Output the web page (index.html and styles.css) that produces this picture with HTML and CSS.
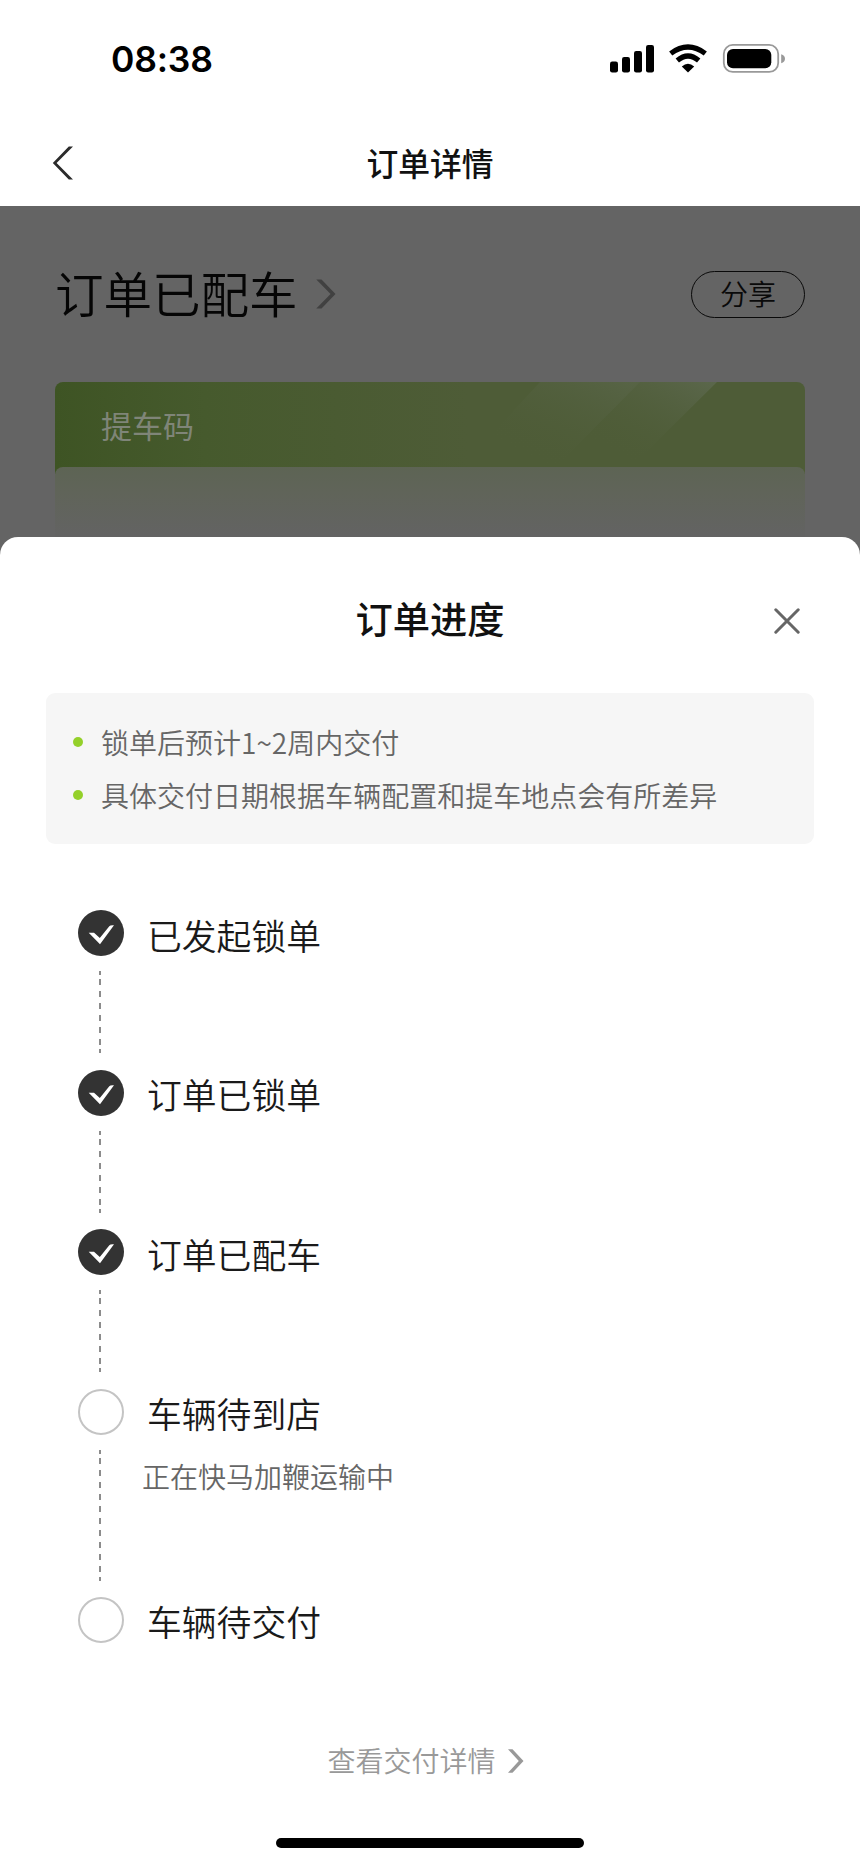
FILE: index.html
```html
<!DOCTYPE html>
<html lang="zh-CN">
<head>
<meta charset="utf-8">
<title>订单详情</title>
<link rel="stylesheet" href="styles.css">
</head>
<body>
<div class="phone">
  <header class="top">
    <div class="status">
      <span class="time">08:38</span>
      <svg class="status-icons" width="176" height="32" viewBox="0 0 176 32">
        <g fill="#000">
          <rect x="0" y="17.500" width="8" height="11" rx="2.200"/>
          <rect x="12" y="13" width="8" height="15.500" rx="2.200"/>
          <rect x="24" y="7" width="8" height="21.500" rx="2.200"/>
          <rect x="36" y="1" width="8" height="27.500" rx="2.200"/>
          <path d="M78 28.500 L71.800 22.400 Q78 17.200 84.200 22.400 Z"/>
        </g>
        <g fill="none" stroke="#000" stroke-width="5.200">
          <path d="M60.700 9.500 Q78 -3.500 95.300 9.500"/>
          <path d="M67.300 16.500 Q78 7.500 88.700 16.500"/>
        </g>
        <rect x="113.800" y="0.900" width="54.400" height="27" rx="9" fill="none" stroke="#999" stroke-width="1.800"/>
        <rect x="117" y="5" width="44.300" height="19.300" rx="6" fill="#000"/>
        <path d="M171.200 10.200 Q175 11.500 175 14.700 Q175 18 171.200 19.200 Z" fill="#999"/>
      </svg>
    </div>
    <nav class="nav">
      <svg class="back" width="22" height="34" viewBox="0 0 22 34"><path d="M17.800 .5 H22 L5.600 17 L22 33.500 H17.800 L1.800 17 Z" fill="#2b2b2b"/></svg>
      <h1 class="nav-title">订单详情</h1>
    </nav>
  </header>

  <section class="order">
    <div class="order-head">
      <h2 class="order-state">订单已配车</h2>
      <svg class="order-arrow" width="20" height="30" viewBox="0 0 20 30"><path d="M.3 .5 H5.500 L19.500 15 L5.500 29.500 H.3 L14.600 15 Z" fill="#414141"/></svg>
      <span class="share">分享</span>
    </div>
    <div class="ticket">
      <div class="ticket-label">提车码</div>
      <svg class="rays" width="300" height="86" viewBox="0 0 300 86">
        <defs>
          <linearGradient id="ray" x1="1" y1="0" x2="0" y2="1">
            <stop offset="0" stop-color="#5b674c"/>
            <stop offset=".75" stop-color="#4e5c37" stop-opacity="0"/>
          </linearGradient>
        </defs>
        <path d="M100 0 H200 L115 86 H20 Z" fill="url(#ray)" opacity=".75"/>
        <path d="M195 0 H277 L190 86 H120 Z" fill="url(#ray)"/>
      </svg>
      <div class="ticket-body"></div>
    </div>
  </section>

  <main class="sheet">
    <div class="sheet-head">
      <h2 class="sheet-title">订单进度</h2>
      <svg class="close" width="26" height="26" viewBox="0 0 26 26"><path d="M1.800 1.800 L24.200 24.200 M24.200 1.800 L1.800 24.200" fill="none" stroke="#666" stroke-width="3" stroke-linecap="round"/></svg>
    </div>
    <ul class="notes">
      <li>锁单后预计1~2周内交付</li>
      <li>具体交付日期根据车辆配置和提车地点会有所差异</li>
    </ul>
    <ol class="steps">
      <li class="step">
        <div class="rail"><svg class="dot" viewBox="0 0 46 46"><circle cx="23" cy="23" r="23" fill="#333"/><path d="M10.700 22.700 H16 L21.800 28 L31.300 16.200 Q32.200 15 36 15.300 L22 34.300 Z" fill="#fff"/></svg><i class="line"></i></div>
        <h3 class="step-name">已发起锁单</h3>
      </li>
      <li class="step">
        <div class="rail"><svg class="dot" viewBox="0 0 46 46"><circle cx="23" cy="23" r="23" fill="#333"/><path d="M10.700 22.700 H16 L21.800 28 L31.300 16.200 Q32.200 15 36 15.300 L22 34.300 Z" fill="#fff"/></svg><i class="line"></i></div>
        <h3 class="step-name">订单已锁单</h3>
      </li>
      <li class="step">
        <div class="rail"><svg class="dot" viewBox="0 0 46 46"><circle cx="23" cy="23" r="23" fill="#333"/><path d="M10.700 22.700 H16 L21.800 28 L31.300 16.200 Q32.200 15 36 15.300 L22 34.300 Z" fill="#fff"/></svg><i class="line"></i></div>
        <h3 class="step-name">订单已配车</h3>
      </li>
      <li class="step step-long">
        <div class="rail"><svg class="dot" viewBox="0 0 46 46"><circle cx="23" cy="23" r="22" fill="#fff" stroke="#c4c4c4" stroke-width="2"/></svg><i class="line"></i></div>
        <div><h3 class="step-name">车辆待到店</h3><p class="step-note">正在快马加鞭运输中</p></div>
      </li>
      <li class="step step-last">
        <div class="rail"><svg class="dot" viewBox="0 0 46 46"><circle cx="23" cy="23" r="22" fill="#fff" stroke="#c4c4c4" stroke-width="2"/></svg></div>
        <h3 class="step-name">车辆待交付</h3>
      </li>
    </ol>
    <div class="more">
      <span>查看交付详情</span>
      <svg width="17" height="24" viewBox="0 0 17 24"><path d="M0 .3 H4.500 L15.500 12 L4.500 23.700 H0 L10.800 12 Z" fill="#999"/></svg>
    </div>
    <div class="home-bar"></div>
  </main>
</div>
</body>
</html>
```
FILE: styles.css
```css
* { box-sizing: border-box; margin: 0; padding: 0; }
body { width: 860px; background: #fff; font-family: "Noto Sans CJK SC", sans-serif; font-weight: 350; color: #111; }
h1, h2, h3 { font-weight: 350; }
svg { display: block; flex: none; }
ul, ol { list-style: none; }

.phone { width: 860px; height: 1864px; display: flex; flex-direction: column; background: #646464; overflow: hidden; }

.top { height: 206px; background: #fff; }
.status { height: 118px; padding: 38px 74px 0 111px; display: flex; justify-content: space-between; align-items: flex-start; }
.time { font: 600 35.5px/42px Inter, sans-serif; letter-spacing: -.2px; color: #000; margin-top: 1px; }
.status-icons { margin-top: 5.500px; }
.nav { height: 88px; padding: 0 50px; display: grid; grid-template-columns: 60px 1fr 60px; align-items: center; }
.back { margin: 1px 0 0 1px; }
.nav-title { font-size: 31.800px; font-weight: 500; line-height: 48px; margin-top: -1px; text-align: center; }

.order { height: 331px; padding: 0 55px; display: flex; flex-direction: column; }
.order-head { height: 176px; display: flex; align-items: center; }
.order-state { font-size: 48.500px; line-height: 72px; color: #050505; margin-top: -4px; }
.order-arrow { margin-left: 18px; }
.share { margin-left: auto; width: 114px; height: 47px; border: 1.500px solid #0a0a0a; border-radius: 24px; font-size: 28px; line-height: 43px; text-align: center; color: #0a0a0a; }
.ticket { height: 155px; display: grid; grid-template-rows: 85px 70px; border-radius: 8px 8px 0 0; overflow: hidden; background: linear-gradient(90deg, #3e5424, #465a2d 20%, #4e5c37 55%) 0 0 / 100% 92px no-repeat; }
.ticket-label { grid-area: 1 / 1; padding-left: 46px; font-size: 31px; font-weight: 400; line-height: 85px; color: #7f8578; }
.rays { grid-area: 1 / 1; justify-self: end; margin-right: 65px; }
.ticket-body { grid-area: 2 / 1; border-radius: 8px 8px 0 0; background: linear-gradient(#5d6454, #606459 35%, #636363); }

.sheet { flex: 1; background: #fff; border-radius: 18px 18px 0 0; display: flex; flex-direction: column; padding: 0 46px; }
.sheet-head { height: 156px; display: grid; grid-template-columns: 60px 1fr 60px; align-items: center; padding-top: 12px; }
.sheet-title { grid-column: 2; font-size: 37.300px; font-weight: 500; line-height: 56px; text-align: center; margin-top: -6px; }
.close { justify-self: end; margin: 0 14.500px 1px 0; }
.notes { height: 151px; border-radius: 9px; background: #f6f6f6; padding: 22px 27px; }
.notes li { display: flex; align-items: center; gap: 18px; height: 53.500px; font-size: 28.030px; line-height: 54px; color: #666; white-space: nowrap; }
.notes li::before { content: ""; width: 10px; height: 10px; border-radius: 50%; background: #94d02a; }
.steps { padding: 66px 0 0 32px; }
.step { height: 159.600px; display: flex; gap: 23px; }
.step-long { height: 208px; }
.step-last { height: 100px; }
.rail { width: 46px; display: flex; flex-direction: column; }
.dot { width: 46px; height: 46px; }
.line { width: 2px; margin: 15px 0 0 21px; height: 82px;
  background:
    linear-gradient(#8c8c8c, #8c8c8c) 0 0 / 2px 4px no-repeat,
    linear-gradient(#8c8c8c, #8c8c8c) 0 100% / 2px 4px no-repeat,
    repeating-linear-gradient(#8c8c8c 0 6px, #fff 6px 12px) 0 8px / 2px calc(100% - 16px) no-repeat; }
.step-long .line { height: 131px; }
.step-name { font-size: 34.800px; line-height: 52px; margin-top: -1.500px; color: #1a1a1a; }
.step-note { font-size: 28px; line-height: 42px; margin: 15.500px 0 0 -5px; color: #666; }
.more { margin-top: auto; display: flex; justify-content: center; align-items: center; gap: 12px; font-size: 28px; line-height: 42px; color: #999; padding-right: 8px; }
.more svg { margin-top: 2px; }
.home-bar { width: 308px; height: 10px; border-radius: 5px; background: #000; margin: 57px auto 16px; }
```
